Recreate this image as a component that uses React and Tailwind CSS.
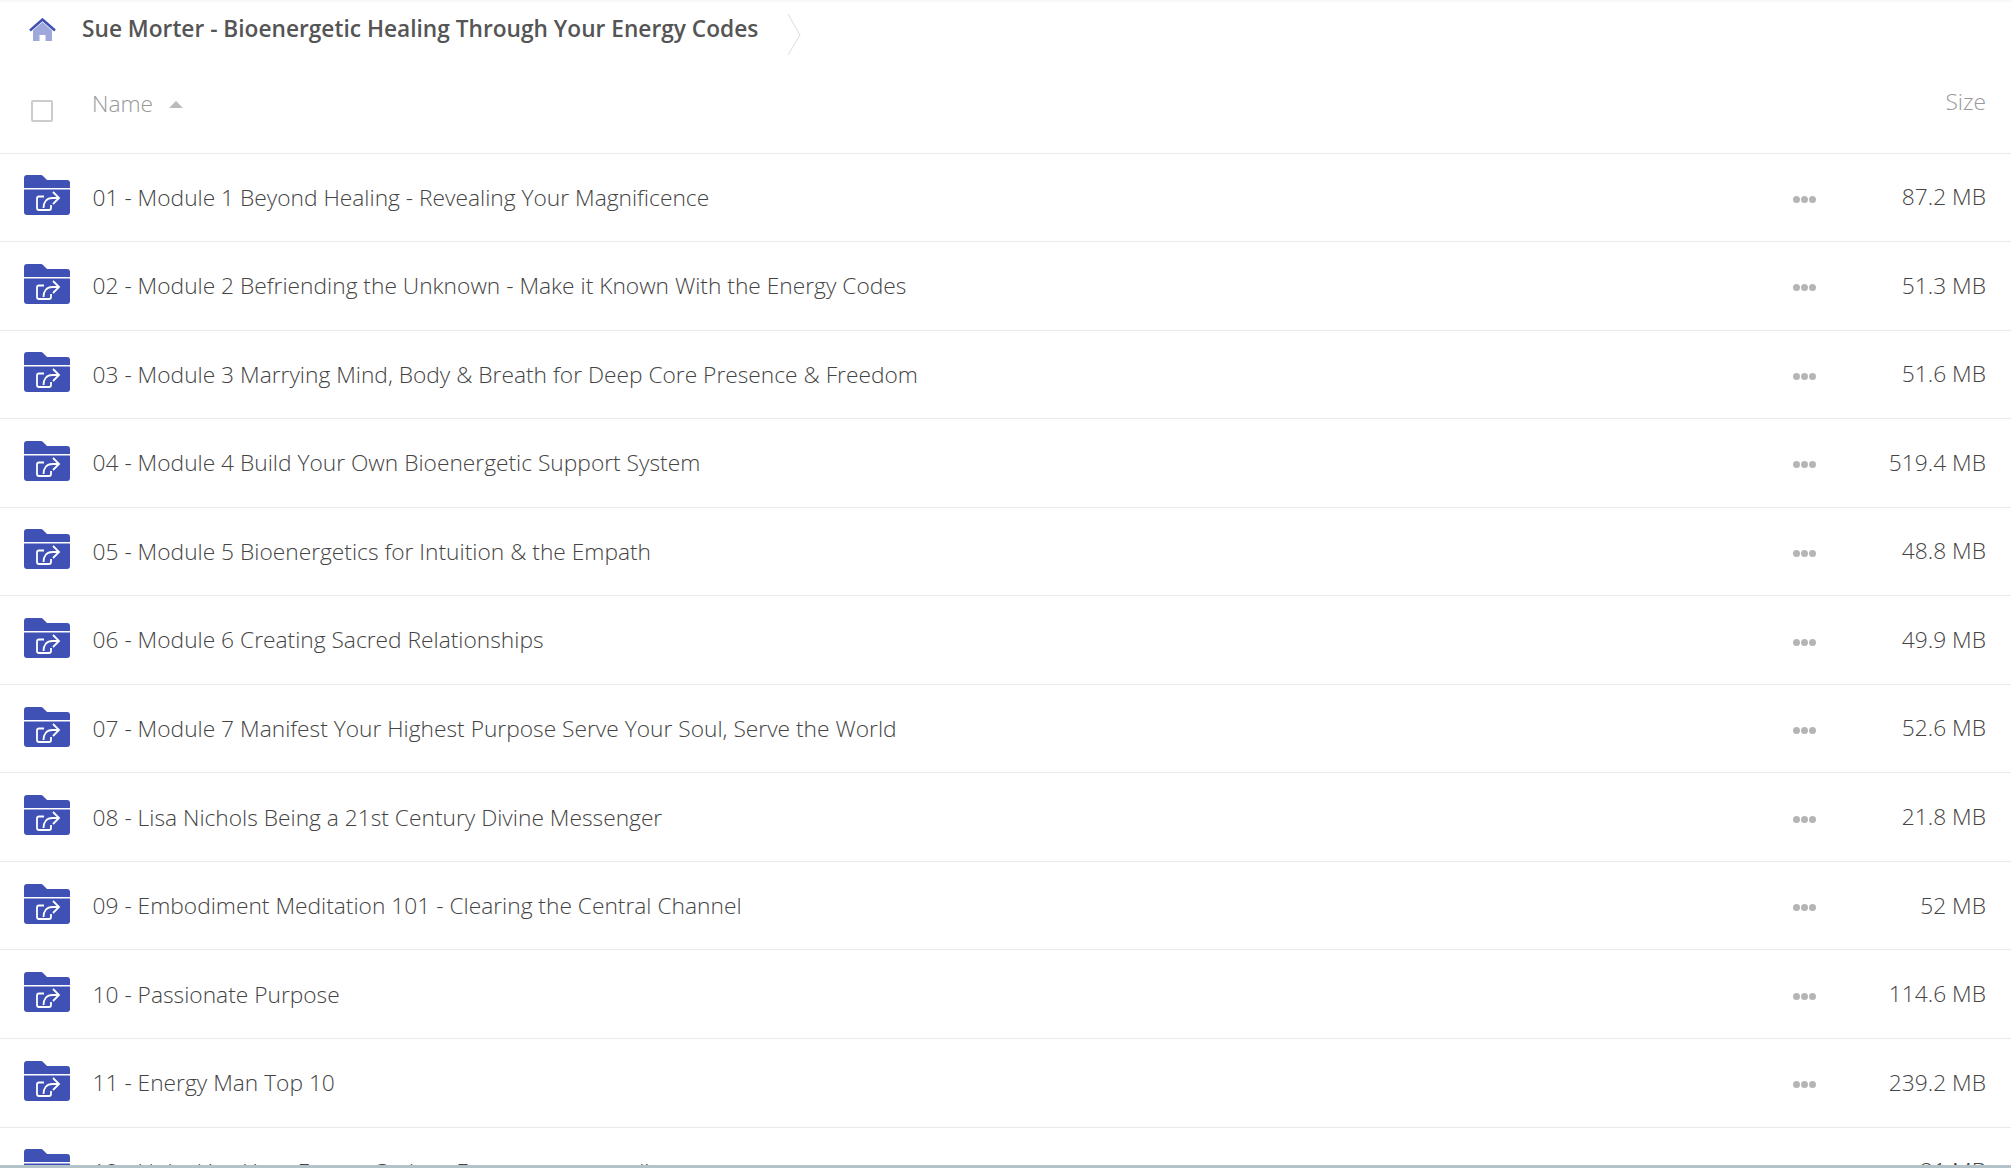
import React from "react";

const rows = [
  ["01 - Module 1 Beyond Healing - Revealing Your Magnificence", "87.2 MB"],
  ["02 - Module 2 Befriending the Unknown - Make it Known With the Energy Codes", "51.3 MB"],
  ["03 - Module 3 Marrying Mind, Body & Breath for Deep Core Presence & Freedom", "51.6 MB"],
  ["04 - Module 4 Build Your Own Bioenergetic Support System", "519.4 MB"],
  ["05 - Module 5 Bioenergetics for Intuition & the Empath", "48.8 MB"],
  ["06 - Module 6 Creating Sacred Relationships", "49.9 MB"],
  ["07 - Module 7 Manifest Your Highest Purpose Serve Your Soul, Serve the World", "52.6 MB"],
  ["08 - Lisa Nichols Being a 21st Century Divine Messenger", "21.8 MB"],
  ["09 - Embodiment Meditation 101 - Clearing the Central Channel", "52 MB"],
  ["10 - Passionate Purpose", "114.6 MB"],
  ["11 - Energy Man Top 10", "239.2 MB"],
  ["12 - Unlocking Your Energy Codes - Energy resources list", "21 MB"],
];

function FolderIcon() {
  return (
    <svg width="46" height="40" viewBox="0 0 46 40" className="shrink-0 -mt-[4px]">
      <path d="M0 13V3a3 3 0 0 1 3-3h14a3 3 0 0 1 2 1l4 4h20a3 3 0 0 1 3 3v5z" fill="#3f51b5" />
      <path d="M0 14.500h46V37a3 3 0 0 1-3 3H3a3 3 0 0 1-3-3z" fill="#3f51b5" />
      <path
        d="M20 21.500h-5a2 2 0 0 0-2 2V33a2 2 0 0 0 2 2h10a2 2 0 0 0 2-2v-3M19.500 33c0-6 3-10 9-10h6.500M29 17l6 6-6 6"
        fill="none"
        stroke="#fff"
        strokeWidth="1.800"
      />
    </svg>
  );
}

function HomeIcon() {
  return (
    <svg width="27" height="24" viewBox="0 0 27 24" className="-mt-[2px]">
      <path d="M4 12.500L13.500 4 23 12.500V23h-6.500v-6h-6v6H4z" fill="#9fa8da" />
      <path d="M1 12.500L13.500 1.500 26 12.500" fill="none" stroke="#3f51b5" strokeWidth="2.500" />
    </svg>
  );
}

function Dots() {
  return (
    <div className="flex gap-[1px] w-[26px] mt-[4px] mr-[-1px] ml-[1px]">
      <span className="w-[7px] h-[7px] rounded-full bg-[#b5b5b5]" />
      <span className="w-[7px] h-[7px] rounded-full bg-[#b5b5b5]" />
      <span className="w-[7px] h-[7px] rounded-full bg-[#b5b5b5]" />
    </div>
  );
}

export default function App() {
  return (
    <div className="h-[1168px] overflow-hidden bg-white flex flex-col font-['Open_Sans',sans-serif]">
      <div className="h-[2px] bg-[#f8f8f8] shrink-0" />
      <div className="flex items-center h-[58px] pl-[29px] shrink-0">
        <HomeIcon />
        <h1 className="ml-[26px] -mt-[3px] text-[22.7px] font-semibold text-[#555]">
          Sue Morter - Bioenergetic Healing Through Your Energy Codes
        </h1>
        <svg width="14" height="44" viewBox="0 0 14 44" className="ml-[29px] mt-[8px]">
          <path d="M1 1l12 21L1 42" fill="none" stroke="#ddd" strokeWidth="1" />
        </svg>
      </div>
      <div className="flex items-center h-[93.5px] shrink-0 border-b border-[#eaeaea] pl-[31px] pr-[25px]">
        <div className="w-[22px] h-[22px] border-2 border-[#ccc] rounded-[2px] mt-[10px]" />
        <span className="ml-[39px] text-[22.75px] font-light text-[#999] -mt-[4px]">Name</span>
        <div className="ml-[16px] -mt-[3px] w-0 h-0 border-x-[7px] border-x-transparent border-b-[7px] border-b-[#bbb]" />
        <span className="ml-auto text-[22.75px] font-light text-[#999] -mt-[8px]">Size</span>
      </div>
      <div className="flex-1 overflow-hidden">
        {rows.map(([name, size]) => (
          <div key={name} className="flex items-center h-[88.55px] border-b border-[#eaeaea] pl-[24px] pr-[25px]">
            <FolderIcon />
            <span className="ml-[22.5px] mt-[1px] flex-1 text-[22.75px] font-light text-[#444]">{name}</span>
            <Dots />
            <span className="w-[168px] text-right text-[22.75px] font-light text-[#444]">{size}</span>
          </div>
        ))}
      </div>
      <div className="h-[3px] bg-[#b4c3ca] shrink-0" />
    </div>
  );
}
